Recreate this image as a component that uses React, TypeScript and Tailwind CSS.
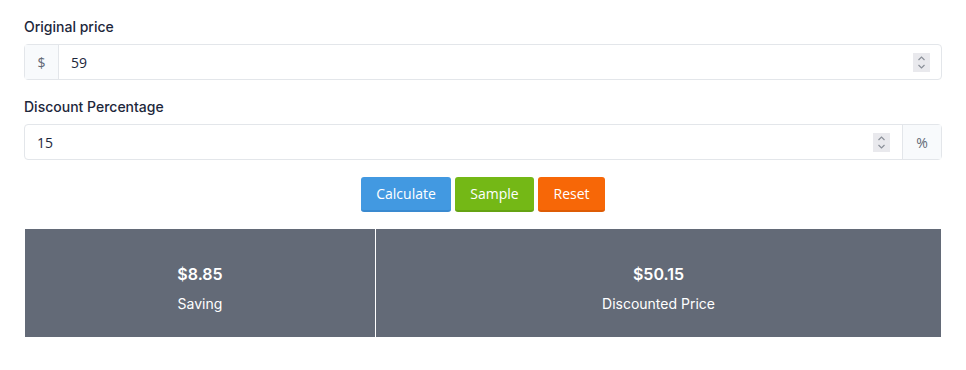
import React from "react";

function Spinner() {
  return (
    <div className="flex h-[19px] w-[17px] flex-col items-center justify-center bg-[#e9e9ed]">
      <svg width="9" height="15" viewBox="0 0 9 15" fill="none" stroke="#8a8f98" strokeWidth="1.2">
        <path d="M1.5 5 L4.5 2 L7.5 5" />
        <path d="M1.5 10 L4.5 13 L7.5 10" />
      </svg>
    </div>
  );
}

export default function App() {
  const inter = { fontFamily: "Inter, 'Noto Sans', sans-serif" };
  return (
    <div className="h-[370px] w-[966px] bg-white px-6 pt-[17px]" style={inter}>
      <div className="text-[14px] font-medium leading-[20px] text-[#1d273b]">Original price</div>
      <div className="mt-[7px] flex h-[36px] rounded-[4px] border border-[#e3e6ea]">
        <div className="flex w-[34px] items-center justify-center border-r border-[#e3e6ea] bg-[#f8fafc] text-[14px] text-[#626976]" style={{ fontFamily: "'Open Sans', sans-serif" }}>$</div>
        <div className="flex flex-1 items-center justify-between pl-[12px] pr-[11px]">
          <span className="text-[14px] text-[#1d273b]" style={{ fontFamily: "'Open Sans', sans-serif" }}>59</span>
          <Spinner />
        </div>
      </div>
      <div className="mt-[17px] text-[14px] font-medium leading-[20px] text-[#1d273b]">Discount Percentage</div>
      <div className="mt-[7px] flex h-[36px] rounded-[4px] border border-[#e3e6ea]">
        <div className="flex flex-1 items-center justify-between pl-[12px] pr-[12px]">
          <span className="text-[14px] text-[#1d273b]" style={{ fontFamily: "'Open Sans', sans-serif" }}>15</span>
          <Spinner />
        </div>
        <div className="flex w-[39px] items-center justify-center border-l border-[#e3e6ea] bg-[#f8fafc] text-[14px] text-[#626976]" style={{ fontFamily: "'Open Sans', sans-serif" }}>%</div>
      </div>
      <div className="mt-[17px] flex justify-center gap-[4px]" style={{ fontFamily: "'Open Sans', sans-serif" }}>
        <button className="h-[35px] w-[90px] rounded-[3px] border-b-2 border-[#3a8ad0] bg-[#4299e1] text-[14px] text-white">Calculate</button>
        <button className="h-[35px] w-[79px] rounded-[3px] border-b-2 border-[#65a313] bg-[#74b816] text-[14px] text-white">Sample</button>
        <button className="h-[35px] w-[67px] rounded-[3px] border-b-2 border-[#de5c05] bg-[#f76707] text-[14px] text-white">Reset</button>
      </div>
      <div className="ml-[1px] mt-[17px] flex h-[108px] w-[916px] bg-[#636a77] text-white">
        <div className="flex w-[351px] flex-col items-center justify-center border-r border-white pt-[12px]">
          <div className="text-[16px] font-semibold leading-[20px]">$8.85</div>
          <div className="mt-[10px] text-[14px] leading-[20px]">Saving</div>
        </div>
        <div className="flex flex-1 flex-col items-center justify-center pt-[12px]">
          <div className="text-[16px] font-semibold leading-[20px]">$50.15</div>
          <div className="mt-[10px] text-[14px] leading-[20px]">Discounted Price</div>
        </div>
      </div>
    </div>
  );
}
